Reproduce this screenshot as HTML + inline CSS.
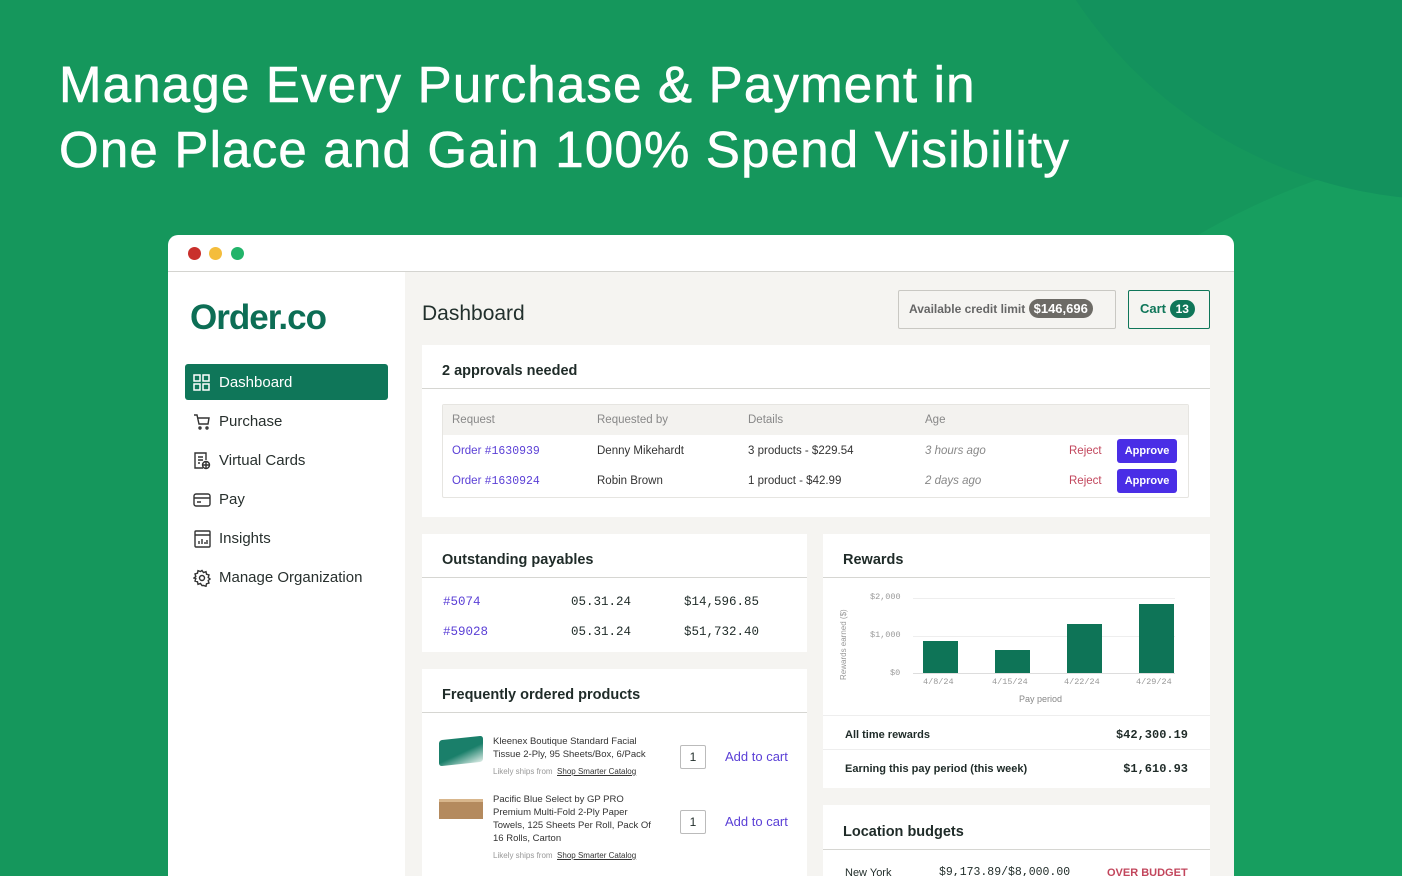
<!DOCTYPE html>
<html><head><meta charset="utf-8"><style>
*{margin:0;padding:0;box-sizing:border-box}
html{width:1402px;height:876px;overflow:hidden}
body{width:1402px;height:876px;overflow:hidden;position:relative;background:#15975c;font-family:"Liberation Sans",sans-serif;color:#1f2b28}
.bg{position:absolute;left:0;top:0;width:1402px;height:876px;overflow:hidden}
.bgc{position:absolute;left:850px;top:140px;width:1400px;height:1400px;border-radius:50%;background:#179e5f}
.bgc2{position:absolute;left:1000px;top:-700px;width:900px;height:900px;border-radius:50%;background:#13925d}
h1{position:absolute;left:59px;top:52px;color:#fff;font-size:51px;font-weight:400;line-height:65px;letter-spacing:1.2px;white-space:nowrap;-webkit-text-stroke:0.6px #fff}
.win{position:absolute;left:168px;top:235px;width:1066px;height:641px;background:#fff;border-radius:10px 10px 0 0;overflow:hidden}
.tb{height:37px;border-bottom:1px solid #d4d4d0;position:relative}
.dot{position:absolute;top:12px;width:13px;height:13px;border-radius:50%}
.side{position:absolute;left:0;top:37px;width:237px;bottom:0;background:#fff}
.main{position:absolute;left:237px;top:37px;right:0;bottom:0;background:#f5f4f1;overflow:hidden}
.a{position:absolute}
.logo{left:22px;top:26px;font-size:35px;font-weight:700;color:#0d6e55;letter-spacing:-1px}
.nav{left:17px;width:203px;height:36px;font-size:15px;color:#28302e;display:flex;align-items:center;padding-left:34px}
.nav svg{position:absolute;left:8px;top:10px}
.card{position:absolute;background:#fff}
.ct{font-weight:700;font-size:14.5px;color:#1f2b28;position:absolute;left:20px}
.hr{position:absolute;left:0;right:0;height:1px;background:#d6d6d2}
.mono{font-family:"Liberation Mono",monospace}
.pur{color:#5a3fd6}
.btn{position:absolute;background:#4a2ee6;color:#fff;font-size:11px;font-weight:700;border-radius:3px;width:60px;height:24px;line-height:24px;text-align:center}
</style></head><body>
<div class="bg"><div class="bgc"></div><div class="bgc2"></div></div>
<h1>Manage Every Purchase &amp; Payment in<br>One Place and Gain 100% Spend Visibility</h1>
<div class="win">
 <div class="tb"><div class="dot" style="left:20px;background:#c9302c"></div><div class="dot" style="left:41px;background:#f4bd3c"></div><div class="dot" style="left:63px;background:#22b46a"></div></div>
 <div class="side">
  <div class="a logo">Order.co</div>
  <div class="a nav" style="top:92px;background:#0f7659;color:#fff;border-radius:3px"><svg width="18" height="18" viewBox="0 0 18 18" fill="none" stroke="#fff" stroke-width="1.5"><rect x="1" y="1" width="6" height="6"/><rect x="10" y="1" width="6" height="6"/><rect x="1" y="10" width="6" height="6"/><rect x="10" y="10" width="6" height="6"/></svg>Dashboard</div>
  <div class="a nav" style="top:131px"><svg width="18" height="18" viewBox="0 0 18 18" fill="none" stroke="#333" stroke-width="1.4"><path d="M1 2h3l2 9h9l1-6H5"/><circle cx="7" cy="15" r="1"/><circle cx="14" cy="15" r="1"/></svg>Purchase</div>
  <div class="a nav" style="top:170px"><svg width="18" height="18" viewBox="0 0 18 18" fill="none" stroke="#333" stroke-width="1.4"><path d="M10 16H2V1h11v7M5 5h5M5 8h5M5 11h2"/><circle cx="13" cy="13" r="3.5"/><path d="M9.5 13h7M13 9.5v7"/></svg>Virtual Cards</div>
  <div class="a nav" style="top:209px"><svg width="18" height="18" viewBox="0 0 18 18" fill="none" stroke="#333" stroke-width="1.4"><rect x="1" y="3" width="16" height="12" rx="2"/><path d="M1 7h16M4 11h4"/></svg>Pay</div>
  <div class="a nav" style="top:248px"><svg width="18" height="18" viewBox="0 0 18 18" fill="none" stroke="#333" stroke-width="1.4"><rect x="2" y="1" width="15" height="16" rx="1"/><path d="M2 5h15M6 14v-3M9 14v-5M12 14v-2M14 14v-4"/></svg>Insights</div>
  <div class="a nav" style="top:287px"><svg width="18" height="18" viewBox="0 0 18 18" fill="none" stroke="#333" stroke-width="1.4"><circle cx="9" cy="9" r="2.5"/><path d="M9 1.5l1.5 2 2.5-.8.5 2.5 2.5.8-.8 2.5 1.8 1.5-1.8 1.5.8 2.5-2.5.8-.5 2.5-2.5-.8L9 16.5l-1.5-2-2.5.8-.5-2.5-2.5-.8.8-2.5L1 9l1.8-1.5L2 5l2.5-.8.5-2.5 2.5.8z"/></svg>Manage Organization</div>
 </div>
 <div class="main">
  <div class="a" style="left:17px;top:30px;font-size:21px;color:#22302d">Dashboard</div>
  <div class="a" style="left:493px;top:18px;width:218px;height:39px;border:1px solid #c9c8c3;border-radius:2px;font-size:12px;font-weight:700;color:#666;padding:10px 0 0 10px">Available credit limit <span style="background:#6d6b66;color:#fff;border-radius:10px;padding:2px 5px;font-size:13px">$146,696</span></div>
  <div class="a" style="left:723px;top:18px;width:82px;height:39px;border:1.5px solid #0f7659;border-radius:2px;font-size:13px;font-weight:700;color:#0f7659;padding:10px 0 0 11px">Cart <span style="background:#0f7659;color:#fff;border-radius:10px;padding:2px 6px;font-size:12px">13</span></div>
  <div class="card" style="left:17px;top:73px;width:788px;height:172px">
   <div class="ct" style="top:18px">2 approvals needed</div>
   <div class="hr" style="top:43px"></div>
   <div class="a" style="left:20px;top:59px;width:747px;height:94px;border:1px solid #e6e5e1;border-radius:2px;font-size:11.5px;color:#333">
    <div class="a" style="left:0;top:0;right:0;height:30px;background:#f3f2ef"></div>
    <div class="a" style="left:9px;top:9px;color:#888">Request</div><div class="a" style="left:154px;top:9px;color:#888">Requested by</div><div class="a" style="left:305px;top:9px;color:#888">Details</div><div class="a" style="left:482px;top:9px;color:#888">Age</div>
    <div class="a pur" style="left:9px;top:40px">Order <span class="mono">#1630939</span></div><div class="a" style="left:154px;top:40px">Denny Mikehardt</div><div class="a" style="left:305px;top:40px">3 products - $229.54</div><div class="a" style="left:482px;top:40px;color:#888;font-style:italic">3 hours ago</div><div class="a" style="left:626px;top:40px;color:#c2465c">Reject</div><div class="btn" style="left:674px;top:34px">Approve</div>
    <div class="a pur" style="left:9px;top:70px">Order <span class="mono">#1630924</span></div><div class="a" style="left:154px;top:70px">Robin Brown</div><div class="a" style="left:305px;top:70px">1 product - $42.99</div><div class="a" style="left:482px;top:70px;color:#888;font-style:italic">2 days ago</div><div class="a" style="left:626px;top:70px;color:#c2465c">Reject</div><div class="btn" style="left:674px;top:64px">Approve</div>
   </div>
  </div>
  <div class="card" style="left:17px;top:262px;width:385px;height:118px">
   <div class="ct" style="top:18px">Outstanding payables</div><div class="hr" style="top:43px"></div>
   <div class="a mono" style="left:21px;top:53px;font-size:12.5px;width:330px;line-height:30px"><span class="pur">#5074</span><span style="position:absolute;left:128px">05.31.24</span><span style="position:absolute;left:241px">$14,596.85</span><br><span class="pur">#59028</span><span style="position:absolute;left:128px;top:30px">05.31.24</span><span style="position:absolute;left:241px;top:30px">$51,732.40</span></div>
  </div>
  <div class="card" style="left:17px;top:397px;width:385px;height:230px">
   <div class="ct" style="top:18px">Frequently ordered products</div><div class="hr" style="top:43px"></div>
   <div class="a" style="left:17px;top:69px;width:44px;height:26px;background:linear-gradient(160deg,#1a7f6a 55%,#dfeee8);border-radius:3px;transform:skewY(-6deg)"></div>
   <div class="a" style="left:71px;top:66px;font-size:9.5px;line-height:13px;color:#333;width:170px">Kleenex Boutique Standard Facial Tissue 2-Ply, 95 Sheets/Box, 6/Pack<div style="font-size:8px;color:#999;margin-top:4px">Likely ships from &nbsp;<u style="color:#333">Shop Smarter Catalog</u></div></div>
   <div class="a" style="left:258px;top:76px;width:26px;height:24px;border:1px solid #bbb;border-radius:2px;font-size:12px;text-align:center;line-height:22px">1</div>
   <div class="a pur" style="left:303px;top:80px;font-size:13px">Add to cart</div>
   <div class="a" style="left:17px;top:130px;width:44px;height:20px;background:#b48a5e;border-top:3px solid #d8b68c"></div>
   <div class="a" style="left:71px;top:124px;font-size:9.5px;line-height:13px;color:#333;width:165px">Pacific Blue Select by GP PRO Premium Multi-Fold 2-Ply Paper Towels, 125 Sheets Per Roll, Pack Of 16 Rolls, Carton<div style="font-size:8px;color:#999;margin-top:4px">Likely ships from &nbsp;<u style="color:#333">Shop Smarter Catalog</u></div></div>
   <div class="a" style="left:258px;top:141px;width:26px;height:24px;border:1px solid #bbb;border-radius:2px;font-size:12px;text-align:center;line-height:22px">1</div>
   <div class="a pur" style="left:303px;top:145px;font-size:13px">Add to cart</div>
  </div>
  <div class="card" style="left:418px;top:262px;width:387px;height:254px">
   <div class="ct" style="top:18px">Rewards</div><div class="hr" style="top:43px"></div>
   <div class="a" style="left:16px;font-size:8px;color:#999;transform:rotate(-90deg);transform-origin:left top;top:146px;white-space:nowrap">Rewards earned ($)</div>
   <div class="a mono" style="left:47px;top:58px;font-size:8.5px;color:#999">$2,000</div>
   <div class="a mono" style="left:47px;top:96px;font-size:8.5px;color:#999">$1,000</div>
   <div class="a mono" style="left:67px;top:134px;font-size:8.5px;color:#999">$0</div>
   <div class="hr" style="left:90px;right:35px;top:64px;background:#eee"></div>
   <div class="hr" style="left:90px;right:35px;top:102px;background:#eee"></div>
   <div class="hr" style="left:90px;right:35px;top:139px;background:#ddd"></div>
   <div class="a" style="left:100px;top:107px;width:35px;height:32px;background:#0e7457"></div>
   <div class="a" style="left:172px;top:116px;width:35px;height:23px;background:#0e7457"></div>
   <div class="a" style="left:244px;top:90px;width:35px;height:49px;background:#0e7457"></div>
   <div class="a" style="left:316px;top:70px;width:35px;height:69px;background:#0e7457"></div>
   <div class="a mono" style="left:100px;top:143px;font-size:8.5px;color:#999;width:300px"><span style="position:absolute;left:0">4/8/24</span><span style="position:absolute;left:69px">4/15/24</span><span style="position:absolute;left:141px">4/22/24</span><span style="position:absolute;left:213px">4/29/24</span></div>
   <div class="a" style="left:196px;top:160px;font-size:9px;color:#888">Pay period</div>
   <div class="hr" style="top:181px;background:#eee"></div>
   <div class="a" style="left:22px;top:195px;font-size:11px;font-weight:700">All time rewards</div><div class="a mono" style="right:22px;top:194px;font-size:12px;font-weight:700">$42,300.19</div>
   <div class="hr" style="top:215px;background:#eee"></div>
   <div class="a" style="left:22px;top:229px;font-size:11px;font-weight:700">Earning this pay period (this week)</div><div class="a mono" style="right:22px;top:228px;font-size:12px;font-weight:700">$1,610.93</div>
  </div>
  <div class="card" style="left:418px;top:533px;width:387px;height:100px">
   <div class="ct" style="top:19px">Location budgets</div><div class="hr" style="top:44px"></div>
   <div class="a" style="left:22px;top:62px;font-size:11px">New York</div>
   <div class="a mono" style="left:116px;top:61px;font-size:11.5px">$9,173.89/$8,000.00</div>
   <div class="a" style="left:284px;top:62px;font-size:11px;color:#c2465c;font-weight:700">OVER BUDGET</div>
  </div>
 </div>
</div>
</body></html>
